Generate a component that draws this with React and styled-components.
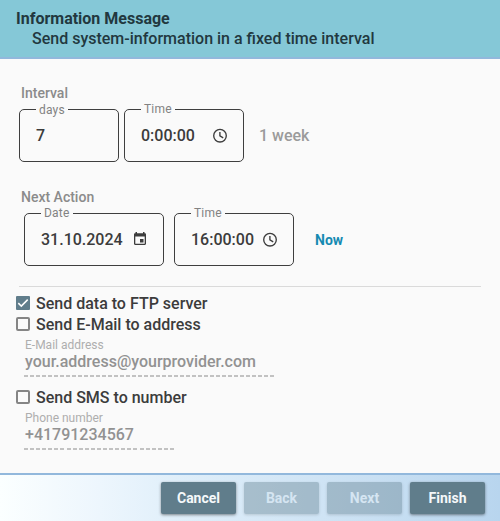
import React from 'react';
import styled, { createGlobalStyle, css } from 'styled-components';

const GlobalStyle = createGlobalStyle`
  * { box-sizing: border-box; }
  body {
    margin: 0;
    background: #fafafa;
    font-family: Roboto, "Liberation Sans", sans-serif;
    font-weight: 500;
    color: #3c3c3c;
  }
`;

const Dialog = styled.div`
  width: 500px;
  height: 521px;
  display: flex;
  flex-direction: column;
  overflow: hidden;
  background: #fafafa;
`;

const Header = styled.header`
  height: 59px;
  padding: 9px 16px 0;
  background: #85c8d7;
  border-bottom: 2px solid #92b8dc;
  color: #22383f;
  font-size: 16px;
  line-height: 20px;
`;

const Title = styled.div`
  font-weight: 700;
`;

const Subtitle = styled.div`
  padding-left: 16px;
`;

const Content = styled.main`
  flex: 1;
  padding: 26px 19px 0 16px;
`;

const Caption = styled.div`
  height: 16px;
  margin: ${(p) => p.$top || 0}px 0 0 5px;
  font-size: 14px;
  line-height: 16px;
  color: #8b8b8b;
`;

const FieldRow = styled.div`
  display: flex;
  height: 53px;
  margin: ${(p) => p.$margin};
`;

const FieldBox = styled.div`
  position: relative;
  display: flex;
  align-items: center;
  width: ${(p) => p.$width}px;
  margin-right: ${(p) => p.$gap}px;
  padding: 0 15px 0 16px;
  border: 1px solid #3f3f3f;
  border-radius: 5px;
  font-size: 16px;

  svg { margin-left: auto; flex: none; }
`;

const Legend = styled.span`
  position: absolute;
  top: ${(p) => p.$top}px;
  left: 16px;
  padding: 0 3px;
  background: #fafafa;
  color: #828282;
  font-size: 12px;
  font-weight: 400;
  line-height: 14px;
  letter-spacing: 0.2px;
`;

const Hint = styled.span`
  align-self: center;
  font-size: 16px;
  color: #9b9b9b;
`;

const NowButton = styled.button`
  align-self: center;
  padding: 0;
  border: 0;
  background: none;
  color: #168ab2;
  font: 700 14px/20px Roboto, sans-serif;
`;

const Divider = styled.hr`
  height: 1px;
  margin: 20px 0 6px 3px;
  border: 0;
  background: #dadada;
`;

const Option = styled.label`
  display: flex;
  align-items: center;
  gap: 6px;
  height: 21px;
  font-size: 16px;
  line-height: 21px;
`;

const CheckBox = styled.span`
  display: flex;
  align-items: center;
  justify-content: center;
  width: 14px;
  height: 14px;
  margin-top: -1px;
  border: 2px solid #858585;
  border-radius: 2px;
  ${(p) => p.$checked && css`
    border: 0;
    border-radius: 1px;
    background: #607d8b;
  `}
`;

const Underlined = styled.div`
  width: ${(p) => p.$width}px;
  height: 42px;
  margin: ${(p) => p.$margin};
  padding: 3px 0 0 1px;
  background: repeating-linear-gradient(90deg, #c2c2c2 0 4px, transparent 4px ${(p) => p.$pitch}px) bottom / 100% 2px no-repeat;
`;

const UnderlinedLabel = styled.div`
  font-size: 12px;
  font-weight: 400;
  line-height: 14px;
  color: #aeaeae;
`;

const UnderlinedValue = styled.div`
  font-size: 16px;
  line-height: 20px;
  color: #929292;
`;

const Footer = styled.footer`
  display: flex;
  gap: 8px;
  height: 48px;
  padding: 7px 15px 0;
  justify-content: flex-end;
  border-top: 2px solid #92b8dc;
  background: linear-gradient(90deg, #fbffff 0%, #edf6fd 20%, #e0effa 35%, #c9e0f3 75%, #b8d5ee 100%);
`;

const Button = styled.button`
  width: 75px;
  height: 32px;
  padding: 0;
  border: 0;
  border-radius: 2px;
  background: ${(p) => (p.disabled ? 'rgba(96, 125, 139, 0.4)' : '#607d8b')};
  box-shadow: 0 1px 3px rgba(0, 0, 0, ${(p) => (p.disabled ? 0.15 : 0.45)});
  color: ${(p) => (p.disabled ? '#d5e5f2' : '#f5f8fa')};
  font: 700 14px/32px Roboto, sans-serif;
`;

const ClockIcon = () => (
  <svg width="16" height="16" viewBox="0 0 16 16" fill="none" stroke="#3c3c3c" strokeWidth="1.35">
    <circle cx="8" cy="7.7" r="6.3" />
    <path d="M7.900 3.900V7.900L11.200 9.900" />
  </svg>
);

const CalendarIcon = () => (
  <svg width="16" height="16" viewBox="0 1 16 16" fill="#3c3c3c">
    <path fillRule="evenodd" d="M3.500 1H5v1.300h6V1h1.500v1.300h.3c.7 0 1.200.5 1.200 1.200v9.300c0 .7-.5 1.200-1.200 1.200H3.200C2.500 14 2 13.500 2 12.800V3.500c0-.7.5-1.200 1.200-1.200h.3zM3.300 5.600v7.100h9.400V5.600z" />
    <path d="M8 8h3.500v3.500H8z" />
  </svg>
);

const CheckIcon = () => (
  <svg width="14" height="14" viewBox="0 0 14 14" fill="none" stroke="#fff" strokeWidth="1.5">
    <path d="M2.300 7.100L5.300 10.100L11.700 3.600" />
  </svg>
);

const Field = ({ label, value, width, gap = 0, icon, legendTop = -8 }) => (
  <FieldBox $width={width} $gap={gap}>
    <Legend $top={legendTop}>{label}</Legend>
    <span>{value}</span>
    {icon}
  </FieldBox>
);

const CheckOption = ({ checked, children }) => (
  <Option>
    <CheckBox $checked={checked}>{checked && <CheckIcon />}</CheckBox>
    {children}
  </Option>
);

export default function App() {
  return (
    <>
      <GlobalStyle />
      <Dialog>
        <Header>
          <Title>Information Message</Title>
          <Subtitle>Send system-information in a fixed time interval</Subtitle>
        </Header>
        <Content>
          <Caption>Interval</Caption>
          <FieldRow $margin="8px 0 0 3px">
            <Field label="days" value="7" width={100} gap={5} legendTop={-7} />
            <Field label="Time" value="0:00:00" width={120} gap={15} icon={<ClockIcon />} />
            <Hint>1 week</Hint>
          </FieldRow>
          <Caption $top={27}>Next Action</Caption>
          <FieldRow $margin="8px 0 0 8px">
            <Field label="Date" value="31.10.2024" width={140} gap={10} icon={<CalendarIcon />} />
            <Field label="Time" value="16:00:00" width={120} gap={21} icon={<ClockIcon />} />
            <NowButton>Now</NowButton>
          </FieldRow>
          <Divider />
          <CheckOption checked>Send data to FTP server</CheckOption>
          <CheckOption>Send E-Mail to address</CheckOption>
          <Underlined $width={250} $pitch={6} $margin="0 0 10px 8px">
            <UnderlinedLabel>E-Mail address</UnderlinedLabel>
            <UnderlinedValue>your.address@yourprovider.com</UnderlinedValue>
          </Underlined>
          <CheckOption>Send SMS to number</CheckOption>
          <Underlined $width={150} $pitch={6.083} $margin="0 0 0 8px">
            <UnderlinedLabel>Phone number</UnderlinedLabel>
            <UnderlinedValue>+41791234567</UnderlinedValue>
          </Underlined>
        </Content>
        <Footer>
          <Button>Cancel</Button>
          <Button disabled>Back</Button>
          <Button disabled>Next</Button>
          <Button>Finish</Button>
        </Footer>
      </Dialog>
    </>
  );
}
